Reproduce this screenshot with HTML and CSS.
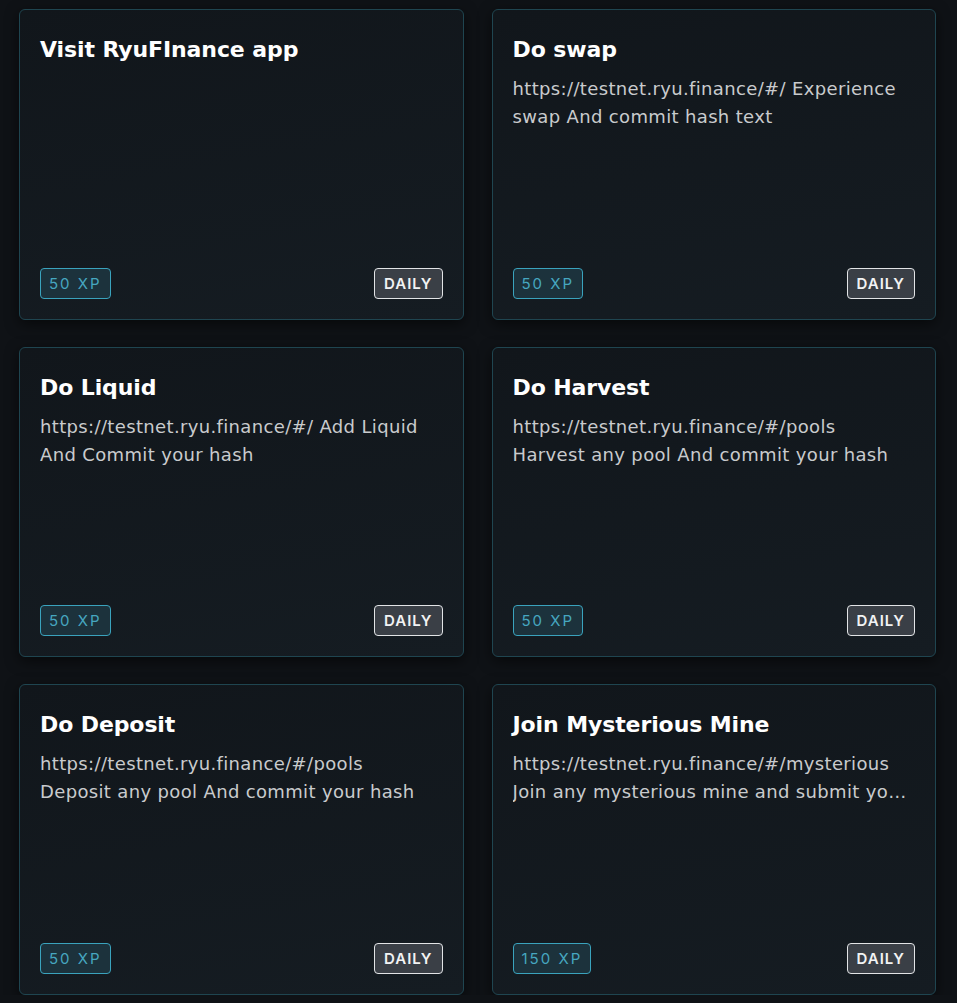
FILE: index.html
```html
<!DOCTYPE html>
<html lang="en">
<head>
<meta charset="utf-8">
<title>Tasks</title>
<link rel="stylesheet" href="styles.css">
</head>
<body>
<main class="grid">
  <article class="card">
    <div class="card-body">
      <h2 class="title">Visit RyuFInance app</h2>
    </div>
    <div class="card-foot"><span class="xp">50 XP</span><span class="freq">DAILY</span></div>
  </article>
  <article class="card">
    <div class="card-body">
      <h2 class="title">Do swap</h2>
      <p class="desc">https://testnet.ryu.finance/#/ Experience swap And commit hash text</p>
    </div>
    <div class="card-foot"><span class="xp">50 XP</span><span class="freq">DAILY</span></div>
  </article>
  <article class="card">
    <div class="card-body">
      <h2 class="title">Do Liquid</h2>
      <p class="desc">https://testnet.ryu.finance/#/ Add Liquid And Commit your hash</p>
    </div>
    <div class="card-foot"><span class="xp">50 XP</span><span class="freq">DAILY</span></div>
  </article>
  <article class="card">
    <div class="card-body">
      <h2 class="title">Do Harvest</h2>
      <p class="desc">https://testnet.ryu.finance/#/pools Harvest any pool And commit your hash</p>
    </div>
    <div class="card-foot"><span class="xp">50 XP</span><span class="freq">DAILY</span></div>
  </article>
  <article class="card">
    <div class="card-body">
      <h2 class="title">Do Deposit</h2>
      <p class="desc">https://testnet.ryu.finance/#/pools Deposit any pool And commit your hash</p>
    </div>
    <div class="card-foot"><span class="xp">50 XP</span><span class="freq">DAILY</span></div>
  </article>
  <article class="card">
    <div class="card-body">
      <h2 class="title">Join Mysterious Mine</h2>
      <p class="desc">https://testnet.ryu.finance/#/mysterious Join any mysterious mine and submit your hash</p>
    </div>
    <div class="card-foot"><span class="xp">150 XP</span><span class="freq">DAILY</span></div>
  </article>
</main>
</body>
</html>
```
FILE: styles.css
```css
html, body {
  margin: 0;
  background: #0f1216;
}
body {
  padding: 9px 21px 0 19px;
  font-family: "DejaVu Sans", "Open Sans", sans-serif;
  color: #fff;
}
.grid {
  display: grid;
  grid-template-columns: 1fr 1fr;
  gap: 27px 28px;
}
.card {
  box-sizing: border-box;
  height: 310.5px;
  border: 1px solid #1f4550;
  border-radius: 6px;
  background: linear-gradient(170deg, #11161b 0%, #151c22 100%);
  box-shadow: 0 4px 14px rgba(0, 0, 0, 0.55);
  padding: 20px;
  display: flex;
  flex-direction: column;
  justify-content: space-between;
}
.title {
  margin: 0;
  font-size: 22px;
  font-weight: 700;
  line-height: 40px;
  color: #ffffff;
  letter-spacing: -0.1px;
}
.desc {
  margin: 5px 5px 0 0;
  font-size: 18px;
  letter-spacing: 0.35px;
  line-height: 28px;
  color: #c9cbcd;
  display: -webkit-box;
  -webkit-line-clamp: 2;
  -webkit-box-orient: vertical;
  overflow: hidden;
}
.card-foot {
  display: flex;
  justify-content: space-between;
  align-items: center;
}
.xp, .freq {
  box-sizing: border-box;
  height: 31px;
  display: inline-flex;
  align-items: center;
  border-radius: 4px;
  font-family: "Inter", "DejaVu Sans", sans-serif;
  font-size: 15px;
}
.xp {
  padding: 0 8px;
  border: 1px solid #3aa3bd;
  background: #1c323c;
  color: #46a7c0;
  letter-spacing: 2px;
}
.freq {
  padding: 0 9px;
  border: 1px solid #e2e4e6;
  background: #3a3f46;
  color: #f2f3f4;
  font-weight: 600;
  letter-spacing: 1px;
}
```
